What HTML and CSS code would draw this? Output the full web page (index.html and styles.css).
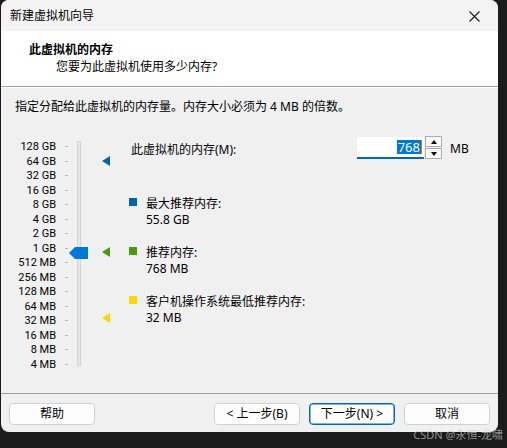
FILE: index.html
```html
<!DOCTYPE html>
<html lang="zh-CN">
<head>
    <meta charset="UTF-8">
    <title>新建虚拟机向导</title>
    <link rel="stylesheet" href="styles.css">
</head>
<body>

    <div class="window">
        <!-- title bar -->
        <div class="titlebar">
            <span class="title">新建虚拟机向导</span>
            <svg class="close" width="11" height="11" viewBox="0 0 11 11">
                <path d="M0.5 0.5 L10.5 10.5 M10.5 0.5 L0.5 10.5" stroke="#1a1a1a" stroke-width="1.1" fill="none"/>
            </svg>
        </div>

        <!-- header -->
        <div class="header">
            <div class="head-title">此虚拟机的内存</div>
            <div class="head-sub">您要为此虚拟机使用多少内存?</div>
        </div>

        <div class="main">
            <div class="intro">指定分配给此虚拟机的内存量。内存大小必须为 4 MB 的倍数。</div>

            <div class="content">
                <!-- slider -->
                <div class="scale">
                    <div class="labels">
                        <div class="row"><span>128 GB</span><i></i></div>
                        <div class="row"><span>64 GB</span><i></i></div>
                        <div class="row"><span>32 GB</span><i></i></div>
                        <div class="row"><span>16 GB</span><i></i></div>
                        <div class="row"><span>8 GB</span><i></i></div>
                        <div class="row"><span>4 GB</span><i></i></div>
                        <div class="row"><span>2 GB</span><i></i></div>
                        <div class="row"><span>1 GB</span><i></i></div>
                        <div class="row"><span>512 MB</span><i></i></div>
                        <div class="row"><span>256 MB</span><i></i></div>
                        <div class="row"><span>128 MB</span><i></i></div>
                        <div class="row"><span>64 MB</span><i></i></div>
                        <div class="row"><span>32 MB</span><i></i></div>
                        <div class="row"><span>16 MB</span><i></i></div>
                        <div class="row"><span>8 MB</span><i></i></div>
                        <div class="row"><span>4 MB</span><i></i></div>
                    </div>
                    <div class="track"></div>

                    <svg class="thumb" width="19" height="12" viewBox="0 0 19 12">
                        <polygon points="0,6 6,0 19,0 19,12 6,12" fill="#0078d7"/>
                    </svg>
                    <span class="mark mark-max"></span>
                    <span class="mark mark-rec"></span>
                    <span class="mark mark-min"></span>
                </div>

                <!-- details -->
                <div class="details">
                    <div class="mem-row">
                        <label class="mem-label" for="mem">此虚拟机的内存(M):</label>
                        <div class="mem-input" id="mem"><span class="sel">768</span><span class="caret"></span></div>
                        <div class="spin">
                            <div class="spin-btn"><span class="up"></span></div>
                            <div class="spin-btn"><span class="down"></span></div>
                        </div>
                        <span class="unit">MB</span>
                    </div>

                    <div class="legend">
                        <span class="sq sq-max"></span>
                        <div>
                            <div>最大推荐内存:</div>
                            <div>55.8 GB</div>
                        </div>
                    </div>
                    <div class="legend">
                        <span class="sq sq-rec"></span>
                        <div>
                            <div>推荐内存:</div>
                            <div>768 MB</div>
                        </div>
                    </div>
                    <div class="legend">
                        <span class="sq sq-min"></span>
                        <div>
                            <div>客户机操作系统最低推荐内存:</div>
                            <div>32 MB</div>
                        </div>
                    </div>
                </div>
            </div>
        </div>

        <!-- buttons -->
        <div class="footer">
            <button class="btn">帮助</button>
            <div class="nav">
                <button class="btn">&lt; 上一步(B)</button>
                <button class="btn btn-focus">下一步(N) &gt;</button>
                <button class="btn">取消</button>
            </div>
        </div>
    </div>

    <div class="watermark">CSDN @永恒-龙啸</div>

</body>
</html>
```

FILE: styles.css
```css
body {
    margin: 0;
    width: 507px;
    height: 448px;
    background: #1b1b1b;
    font-family: "Noto Sans", "Noto Sans CJK SC", sans-serif;
    font-size: 12px;
    line-height: 16px;
    color: #000;
    position: relative;
    overflow: hidden;
}

.window {
    margin-left: 1px;
    width: 497px;
    height: 432px;
    background: #f0f0f0;
    border-radius: 8px;
    overflow: hidden;
    display: flex;
    flex-direction: column;
}

/* title bar */
.titlebar {
    height: 31px;
    flex-shrink: 0;
    background: #f3f3f3;
    display: flex;
    align-items: center;
    padding: 1px 9px 0;
    box-sizing: border-box;
}

.title {
    flex: 1;
}

.close {
    margin-right: 9px;
}

/* header */
.header {
    height: 56px;
    flex-shrink: 0;
    background: #fff;
    border-bottom: 1px solid #a0a0a0;
    box-sizing: border-box;
    padding: 11px 0 0 28px;
}

.head-title {
    font-weight: bold;
}

.head-sub {
    margin-top: 1px;
    padding-left: 27px;
}

/* main */
.main {
    flex: 1;
    border-top: 1px solid #fff;
    padding: 11px 14px 0;
}

.content {
    margin-top: 22px;
    display: flex;
}

.scale {
    position: relative;
    width: 114px;
    display: flex;
}

.labels {
    padding-top: 2.5px;
}

.row {
    height: 14.5px;
    display: flex;
    align-items: center;
}

.row span {
    width: 41px;
    text-align: right;
    white-space: nowrap;
    font-family: Roboto, "Noto Sans", sans-serif;
    font-size: 11px;
    line-height: 13px;
}

.row i {
    width: 3px;
    height: 1px;
    margin-left: 9px;
    background: #b4b4b4;
}

.track {
    margin: 4px 0 0 9px;
    width: 4px;
    height: 225px;
    box-sizing: border-box;
    background: #e6e6e6;
    border: 1px solid #d4d4d4;
}

.thumb {
    position: absolute;
    left: 54px;
    top: 110px;
}

.mark {
    position: absolute;
    left: 87px;
    width: 0;
    height: 0;
    border-top: 5px solid transparent;
    border-bottom: 5px solid transparent;
    border-right: 8px solid;
}

.mark-max { top: 19px; border-right-color: #0063b1; }
.mark-rec { top: 110px; border-right-color: #4a9a0b; }
.mark-min { top: 176px; border-right-color: #fcd600; }

/* details */
.details {
    flex: 1;
}

.mem-row {
    height: 21px;
    display: flex;
    align-items: center;
}

.mem-label {
    width: 226px;
    padding: 4px 0 0 2px;
}

.mem-input {
    width: 67px;
    height: 22px;
    box-sizing: border-box;
    background: #fff;
    border-bottom: 2px solid #0067c0;
    display: flex;
    align-items: center;
    justify-content: flex-end;
    padding-right: 2px;
    font-size: 13px;
}

.sel {
    background: #0078d7;
    color: #fff;
    line-height: 14px;
    padding: 0 1px;
}

.caret {
    width: 1px;
    height: 14px;
    background: #e07000;
}

.spin {
    width: 17px;
    height: 23px;
    margin-left: 1px;
    display: flex;
    flex-direction: column;
    gap: 1px;
}

.spin-btn {
    flex: 1;
    border: 1px solid #adadad;
    background: #f9f9f9;
    display: flex;
    align-items: center;
    justify-content: center;
}

.up, .down {
    width: 0;
    height: 0;
    border-left: 3.5px solid transparent;
    border-right: 3.5px solid transparent;
}

.up { border-bottom: 4px solid #000; }
.down { border-top: 4px solid #000; }

.unit {
    margin-left: 8px;
    padding-top: 2px;
}

.legend {
    display: flex;
    margin-top: 17px;
}

.mem-row + .legend {
    margin-top: 38px;
}

.sq {
    width: 8px;
    height: 8px;
    margin: 2px 9px 0 0;
    flex-shrink: 0;
}

.sq-max { background: #0063b1; }
.sq-rec { background: #4a9a0b; }
.sq-min { background: #fcd600; }

/* footer */
.footer {
    height: 39px;
    flex-shrink: 0;
    box-sizing: border-box;
    border-top: 1px solid #a0a0a0;
    padding: 9px 8px 0 8px;
    display: flex;
    align-items: flex-start;
}

.nav {
    margin-left: auto;
    display: flex;
    gap: 9px;
}

.btn {
    width: 86px;
    height: 22px;
    box-sizing: border-box;
    background: #fdfdfd;
    border: 1px solid #d0d0d0;
    border-radius: 4px;
    font-family: inherit;
    font-size: 12px;
    line-height: 16px;
    color: #000;
    padding: 0;
}

.btn-focus {
    border: 1px solid #0067c0;
    box-shadow: inset 0 0 0 0.5px #0067c0;
}

.watermark {
    position: absolute;
    right: 4px;
    top: 428px;
    font-size: 11px;
    line-height: 14px;
    color: rgba(200, 200, 200, 0.7);
}
```
